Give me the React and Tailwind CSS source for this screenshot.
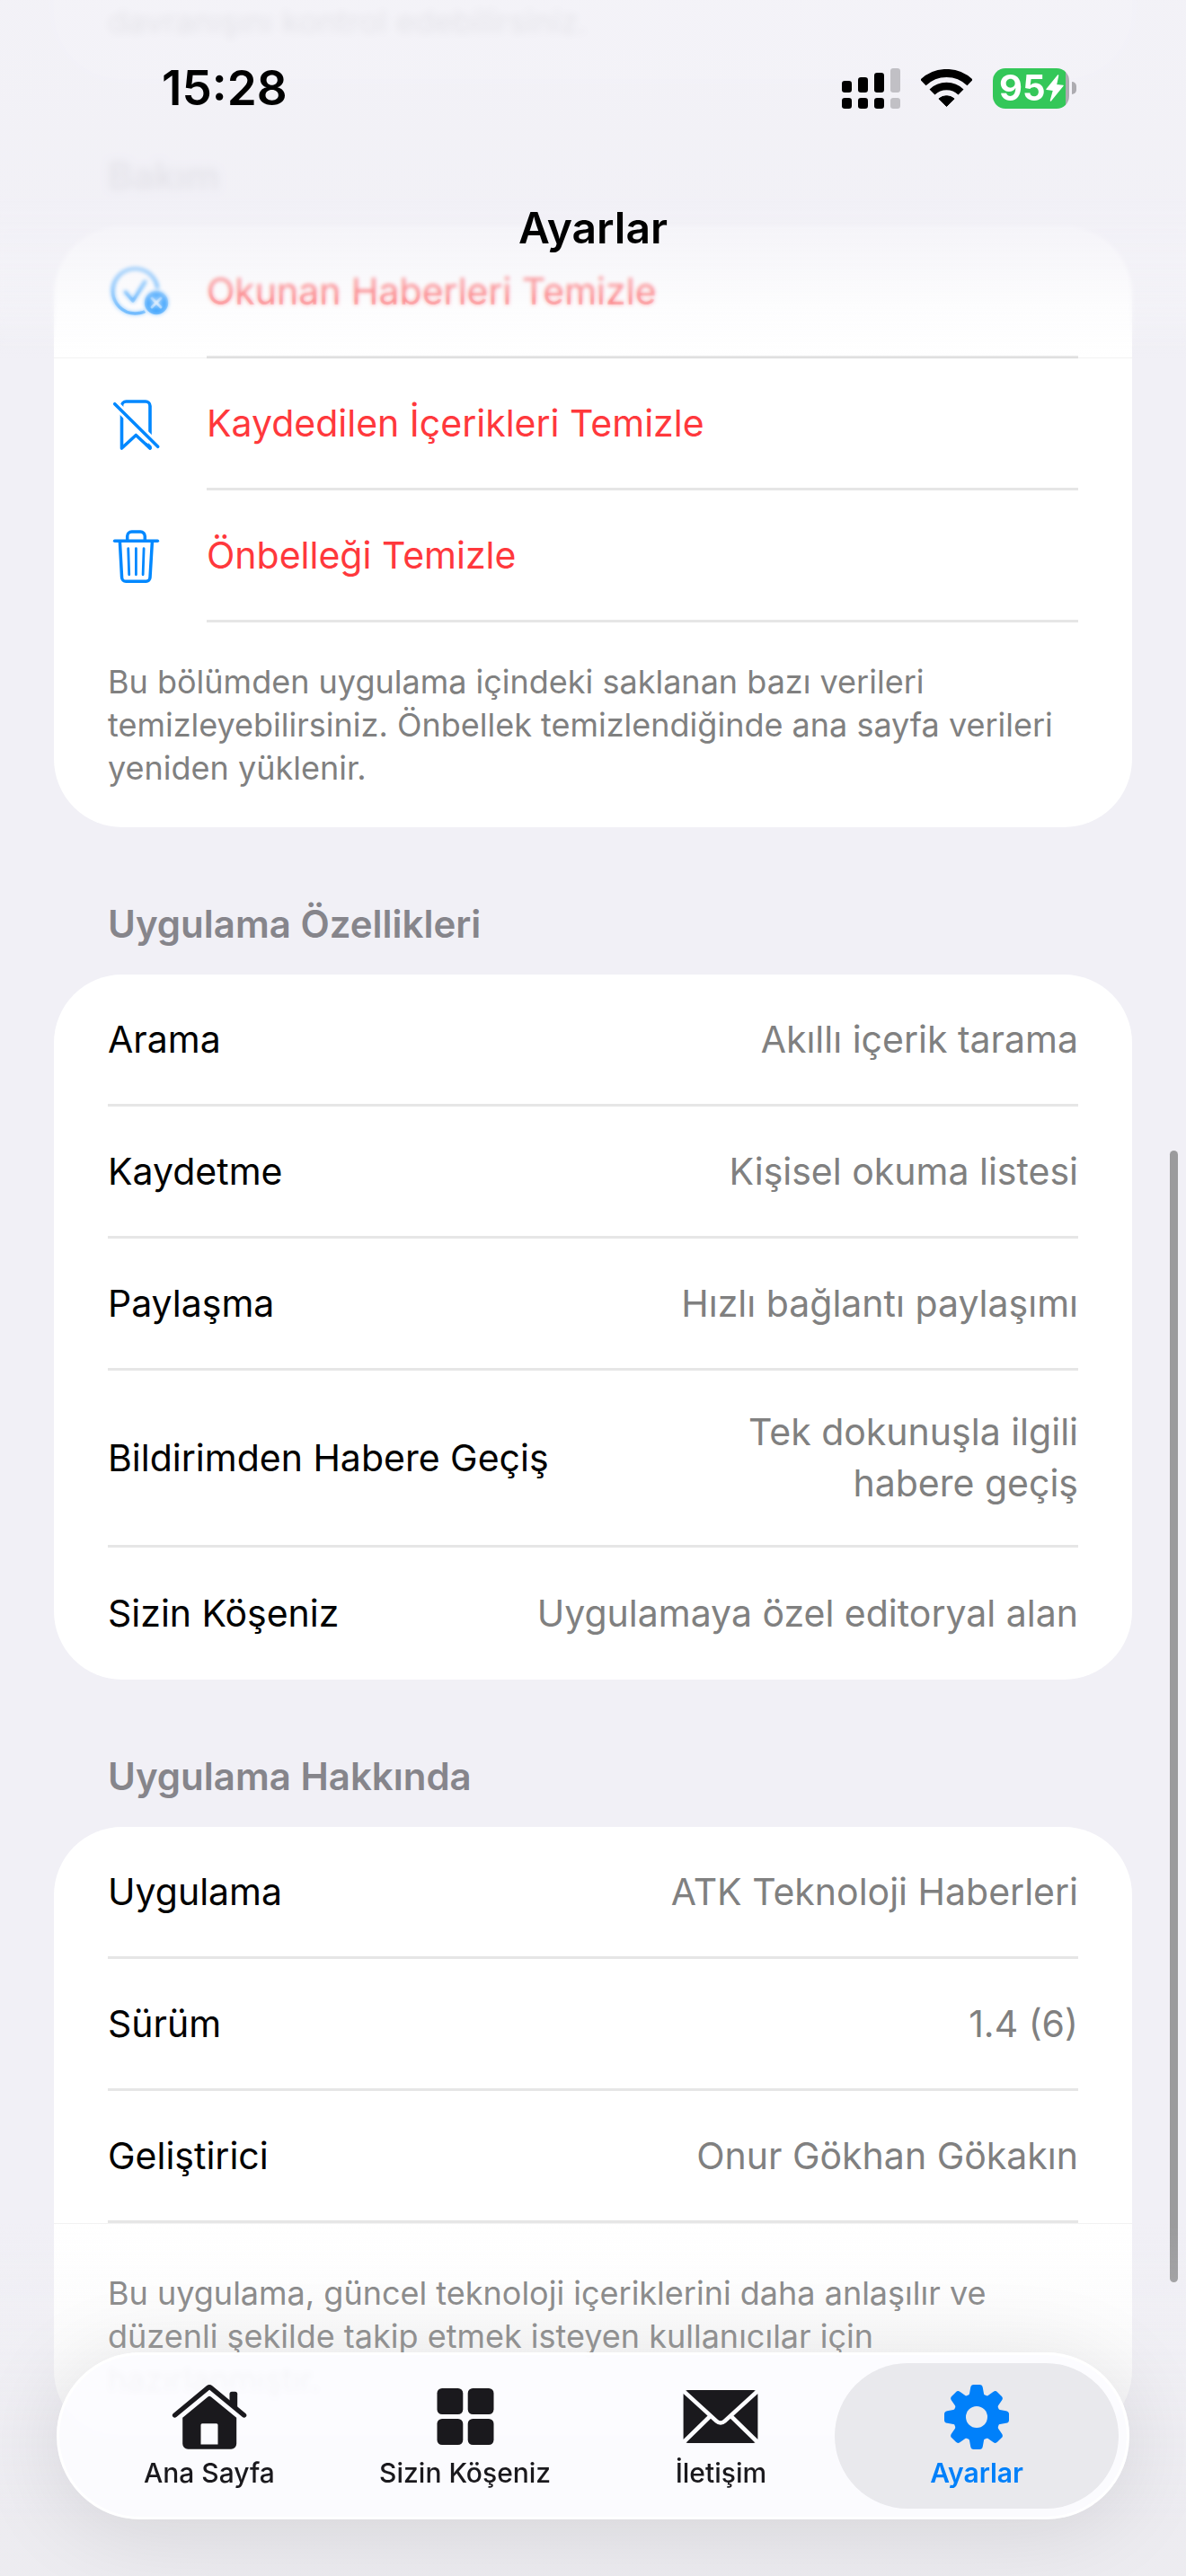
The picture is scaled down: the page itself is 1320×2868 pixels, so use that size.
import React from "react";

const FEATURES = [
  ["Arama", "Akıllı içerik tarama"],
  ["Kaydetme", "Kişisel okuma listesi"],
  ["Paylaşma", "Hızlı bağlantı paylaşımı"],
  ["Bildirimden Habere Geçiş", "Tek dokunuşla ilgili habere geçiş", "max-w-[400px]"],
  ["Sizin Köşeniz", "Uygulamaya özel editoryal alan"],
];

const ABOUT = [
  ["Uygulama", "ATK Teknoloji Haberleri"],
  ["Sürüm", "1.4 (6)"],
  ["Geliştirici", "Onur Gökhan Gökakın"],
];

/* ---------- row icons ---------- */

const rowIcon = "h-16 w-[72px] shrink-0";

function ClearReadIcon() {
  return (
    <svg viewBox="0 0 72 64" className={rowIcon} fill="none" stroke="#0088ff" strokeWidth="3.6" strokeLinecap="round" strokeLinejoin="round" aria-hidden="true">
      <mask id="badge-gap">
        <rect width="72" height="64" fill="#fff" stroke="none" />
        <circle cx="54" cy="45" r="16" fill="#000" stroke="none" />
      </mask>
      <circle cx="30.5" cy="32" r="25" mask="url(#badge-gap)" />
      <path d="M19.5 33 28 43 41.5 21.5" />
      <circle cx="54" cy="45" r="13.2" fill="#0088ff" stroke="none" />
      <path d="M49 40 59 50M59 40 49 50" stroke="#fff" strokeWidth="3" />
    </svg>
  );
}

function BookmarkSlashIcon() {
  return (
    <svg viewBox="0 0 72 64" className={rowIcon} fill="none" stroke="#0088ff" strokeWidth="3.6" strokeLinecap="round" strokeLinejoin="round" aria-hidden="true">
      <path d="M15.5 60V13a5 5 0 0 1 5-5H42a5 5 0 0 1 5 5V60L31.3 45.5Z" />
      <path d="M6 9 58 60.5" stroke="#fff" strokeWidth="9" strokeLinecap="butt" />
      <path d="M47 60 43 56" />
      <path d="M7.7 10.7 55.7 58.3" />
    </svg>
  );
}

function TrashIcon() {
  return (
    <svg viewBox="0 0 72 64" className={rowIcon} fill="none" stroke="#0088ff" strokeWidth="3.5" strokeLinecap="round" strokeLinejoin="round" aria-hidden="true">
      <path d="M21.7 16V11a5 5 0 0 1 5-5h9.6a5 5 0 0 1 5 5v5" />
      <path d="M7.6 16.3H55.4" />
      <path d="M13.4 17 15.6 57a4.5 4.5 0 0 0 4.5 4.3H42.6A4.5 4.5 0 0 0 47 57L49.4 17" />
      <path d="M22.7 24.6 23.7 53.8M31.4 24.6V53.8M40.1 24.6 39.1 53.8" strokeWidth="2.8" />
    </svg>
  );
}

/* ---------- tab icons ---------- */

const tabIcon = "h-[72px] w-[84px]";

function HomeIcon() {
  return (
    <svg viewBox="0 0 84 72" className={tabIcon} fill="currentColor" aria-hidden="true">
      <path d="M3.6 34 40.6 3.4a2.4 2.4 0 0 1 3 0L80.6 34" fill="none" stroke="currentColor" strokeWidth="5.4" strokeLinecap="round" strokeLinejoin="round" />
      <path d="M64.5 20V10.2a2.5 2.5 0 0 1 2.5-2.5h3.7a2.5 2.5 0 0 1 2.5 2.5V27.5Z" />
      <path
        fillRule="evenodd"
        d="M12.2 36.8 40.4 13.6a2.6 2.6 0 0 1 3.4 0L72.2 36.8V65.7a6 6 0 0 1-6 6H18.2a6 6 0 0 1-6-6ZM34 43.3a1.5 1.5 0 0 0-1.5 1.5V66.4H51.5V44.8a1.5 1.5 0 0 0-1.5-1.5Z"
      />
    </svg>
  );
}

function GridIcon() {
  return (
    <svg viewBox="0 0 84 72" className={tabIcon} fill="currentColor" aria-hidden="true">
      <rect x="10.5" y="4" width="28.8" height="29" rx="5.5" />
      <rect x="44.7" y="4" width="28.8" height="29" rx="5.5" />
      <rect x="10.5" y="38" width="28.8" height="29" rx="5.5" />
      <rect x="44.7" y="38" width="28.8" height="29" rx="5.5" />
    </svg>
  );
}

function MailIcon() {
  return (
    <svg viewBox="0 0 84 72" className={tabIcon} fill="currentColor" aria-hidden="true">
      <rect x="0.6" y="6" width="82.8" height="59" rx="5" />
      <g fill="none" stroke="#fcfcff" strokeWidth="4.6">
        <path d="M0 6.4 37.5 40.6a6.6 6.6 0 0 0 9 0L84 6.4" />
        <path d="M31 34.5 0 64.8M53 34.5 84 64.8" />
      </g>
    </svg>
  );
}

function GearIcon() {
  return (
    <svg viewBox="0 0 84 72" className={tabIcon} fill="currentColor" aria-hidden="true">
      <mask id="gear-hole">
        <rect width="84" height="72" fill="#fff" />
        <circle cx="42" cy="36" r="12" fill="#000" />
      </mask>
      <g mask="url(#gear-hole)">
        <circle cx="42" cy="36" r="26.2" />
        {[0, 45, 90, 135, 180, 225, 270, 315].map((angle) => (
          <path
            key={angle}
            transform={`rotate(${angle} 42 36)`}
            d="M30.5 13.5Q33.6 12.8 34 10L35.2 3.2Q35.8 0 38.6 0H45.4Q48.2 0 48.8 3.2L50 10Q50.4 12.8 53.5 13.5Z"
          />
        ))}
      </g>
    </svg>
  );
}

/* ---------- status bar ---------- */

function StatusBar() {
  return (
    <div className="flex h-[60px] items-center justify-between pr-[122px] pl-[180px]">
      <time className="text-[53px] leading-[60px] font-semibold">15:28</time>
      <div className="flex items-center gap-[23px]">
        <svg viewBox="0 0 65 45" className="h-[45px] w-[65px]" role="img" aria-label="Sinyal">
          <rect x="0" y="14" width="11" height="13" rx="3.2" />
          <rect x="18" y="10" width="11" height="17" rx="3.2" />
          <rect x="36" y="5" width="11" height="22" rx="3.2" />
          <rect x="54" y="0" width="11" height="27" rx="3.2" fill="#c1c0c5" />
          <rect x="0" y="33" width="11" height="12" rx="3.2" />
          <rect x="18" y="33" width="11" height="12" rx="3.2" />
          <rect x="36" y="33" width="11" height="12" rx="3.2" />
          <rect x="54" y="33" width="11" height="12" rx="3.2" fill="#c1c0c5" />
        </svg>
        <svg viewBox="0 0 57 42" className="h-[42px] w-[57px]" fill="none" stroke="#000" role="img" aria-label="Wi-Fi">
          <path d="M2.4 15A37.5 37.5 0 0 1 54.6 15" strokeWidth="9" />
          <path d="M12.5 25.5A23 23 0 0 1 44.5 25.5" strokeWidth="8.6" />
          <path d="M28.5 41.5 19.9 33A13 13 0 0 1 37.1 33Z" fill="#000" strokeWidth="1" strokeLinejoin="round" />
        </svg>
        <div className="flex items-center gap-[3px]">
          <div className="flex h-[45px] w-[85px] items-center rounded-[14px] bg-[linear-gradient(to_right,#34c759_81px,#adacb1_81px)] pl-[7px] text-white">
            <span className="text-[40px] leading-[48px] font-bold">95</span>
            <svg viewBox="0 0 20 30" className="h-[30px] w-[20px] shrink-0" fill="#fff" stroke="#fff" strokeWidth="1.4" strokeLinejoin="round" aria-hidden="true">
              <path d="M13.6 1 1 16.4 8.6 17.4 5.4 29 19 12.4 11.4 11.6Z" />
            </svg>
          </div>
          <div className="h-[14px] w-[5px] rounded-r-full bg-[#adacb1]" />
        </div>
      </div>
    </div>
  );
}

/* ---------- list parts ---------- */

function Divider({ className = "" }) {
  return <div className={`h-[3px] bg-[#e6e6e6] ${className}`} />;
}

function ActionRow({ icon, label }) {
  return (
    <div>
      <button type="button" className="flex h-36 w-full items-center gap-[38px] text-left text-[#ff383c]">
        {icon}
        <span>{label}</span>
      </button>
      <Divider className="ml-[110px]" />
    </div>
  );
}

function InfoRow({ label, value, valueClass = "", last }) {
  return (
    <>
      <div className="flex min-h-36 items-center justify-between gap-6 py-10 last:min-h-[147px]">
        <dt className="shrink-0">{label}</dt>
        <dd className={`text-right text-[#808080] ${valueClass}`}>{value}</dd>
      </div>
      {!last && <Divider />}
    </>
  );
}

function SectionTitle({ children }) {
  return (
    <h2 className="flex h-[164px] items-end px-[60px] pb-[26px] text-[42px] leading-[60px] font-semibold text-[#86858b]">{children}</h2>
  );
}

function Card({ children, className = "" }) {
  return <section className={`rounded-[76px] bg-white px-[60px] ${className}`}>{children}</section>;
}

function Note({ children, className = "" }) {
  return <p className={`text-[36px] leading-[48px] text-[#808080] ${className}`}>{children}</p>;
}

function Tab({ href, icon, label, active }) {
  return (
    <a
      href={href}
      aria-current={active ? "page" : undefined}
      className={`-ml-[31px] flex flex-1 flex-col items-center gap-2 rounded-full pt-6 pb-[22px] first:ml-0 ${
        active ? "bg-[#e9e9ed] font-semibold text-[#0080fa]" : "font-medium text-[#1a191d]"
      }`}
    >
      {icon}
      <span className="text-[30px] leading-[36px]">{label}</span>
    </a>
  );
}

export default function App() {
  return (
    <div className="relative min-h-screen overflow-hidden bg-[#f1f0f6] font-['Inter','Liberation_Sans',sans-serif] text-[41px] leading-[57px] text-black">
      <main className="px-[60px]">
        <Card className="rounded-t-none pb-10">
          <Note>davranışını kontrol edebilirsiniz.</Note>
        </Card>

        <SectionTitle>Bakım</SectionTitle>
        <Card>
          <ActionRow icon={<ClearReadIcon />} label="Okunan Haberleri Temizle" />
          <ActionRow icon={<BookmarkSlashIcon />} label="Kaydedilen İçerikleri Temizle" />
          <ActionRow icon={<TrashIcon />} label="Önbelleği Temizle" />
          <Note className="py-[42px]">
            Bu bölümden uygulama içindeki saklanan bazı verileri temizleyebilirsiniz. Önbellek temizlendiğinde ana sayfa verileri yeniden yüklenir.
          </Note>
        </Card>

        <SectionTitle>Uygulama Özellikleri</SectionTitle>
        <Card>
          <dl>
            {FEATURES.map(([label, value, valueClass], i) => (
              <InfoRow key={label} label={label} value={value} valueClass={valueClass} last={i === FEATURES.length - 1} />
            ))}
          </dl>
        </Card>

        <SectionTitle>Uygulama Hakkında</SectionTitle>
        <Card>
          <dl>
            {ABOUT.map(([label, value]) => (
              <InfoRow key={label} label={label} value={value} />
            ))}
          </dl>
          <Note className="pt-[54px] pb-[42px]">
            Bu uygulama, güncel teknoloji içeriklerini daha anlaşılır ve düzenli şekilde takip etmek isteyen kullanıcılar için hazırlanmıştır.
          </Note>
        </Card>
      </main>

      <div className="absolute top-[1281px] right-[9px] h-[1260px] w-[9px] rounded-full bg-[#9b9b9d]" />

      <div className="pointer-events-none fixed inset-x-0 top-0 h-[260px] backdrop-blur-[4px] [mask-image:linear-gradient(to_bottom,#000_80%,transparent)]" />
      <div className="pointer-events-none fixed inset-x-0 top-0 h-[390px] backdrop-blur-[2px] [mask-image:linear-gradient(to_bottom,#000_82%,transparent)]" />
      <header className="fixed inset-x-0 top-0 flex h-[399px] flex-col bg-[linear-gradient(to_bottom,rgba(242,241,247,0.88)_0%,rgba(241,240,246,0.88)_55%,rgba(244,243,248,0.62)_74%,rgba(248,248,251,0.3)_86%,rgba(255,255,255,0)_100%)] pt-[68px]">
        <StatusBar />
        <h1 className="mt-24 text-center text-[48px] leading-[60px] font-semibold">Ayarlar</h1>
        <div className="mx-[60px] mt-auto h-px bg-black/5" />
      </header>

      <div className="pointer-events-none fixed inset-x-0 bottom-0 h-[393px] bg-[linear-gradient(to_bottom,rgba(238,237,242,0)_0%,rgba(238,238,240,0.22)_36%,rgba(236,235,240,0.9)_85%)]">
        <div className="mx-[60px] h-px bg-black/5" />
      </div>
      <nav
        aria-label="Sekmeler"
        className="fixed inset-x-[63px] bottom-[63px] flex rounded-full border-[3px] border-white bg-[#fcfcff]/92 p-[9px] shadow-[0_10px_100px_rgba(0,0,0,0.11)] backdrop-blur-[3px]"
      >
        <Tab href="#ana-sayfa" icon={<HomeIcon />} label="Ana Sayfa" />
        <Tab href="#sizin-koseniz" icon={<GridIcon />} label="Sizin Köşeniz" />
        <Tab href="#iletisim" icon={<MailIcon />} label="İletişim" />
        <Tab href="#ayarlar" icon={<GearIcon />} label="Ayarlar" active />
      </nav>
    </div>
  );
}
